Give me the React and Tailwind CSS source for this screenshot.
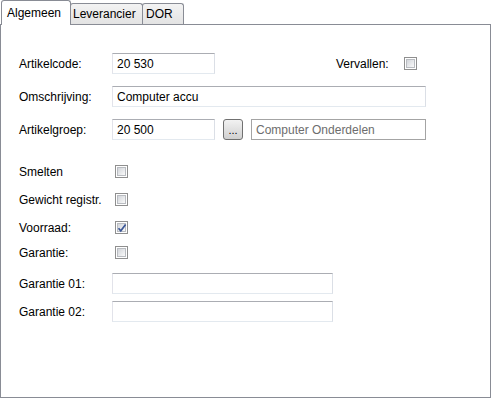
import React from "react";

const font = { fontFamily: '"Liberation Sans", Arial, sans-serif' };

function Field({ w, value, muted, dark }) {
  return (
    <div
      className={`h-[21px] flex items-center pl-[4px] bg-white text-[12px] border ${
        dark
          ? "border-[#a4a4a4]"
          : "border-t-[#abadb3] border-l-[#e2e3ea] border-r-[#dbdfe6] border-b-[#e3e9ef]"
      } ${muted ? "text-[#6d6d6d]" : "text-black"}`}
      style={{ width: w }}
    >
      {value}
    </div>
  );
}

function Check({ checked }) {
  return (
    <div className="w-[13px] h-[13px] border border-[#8f8f8f] bg-white p-[1px] relative">
      <div className="w-full h-full border border-[#b9bcc1] bg-gradient-to-br from-[#d2d5da] to-[#fafafa]" />
      {checked && (
        <svg className="absolute left-[1px] top-[1px]" width="10" height="10" viewBox="0 0 10 10">
          <path d="M1.5 5.2 L3.8 7.8 L8.6 1.6" fill="none" stroke="#3c5797" strokeWidth="1.7" />
        </svg>
      )}
    </div>
  );
}

function Label({ children, w = 93 }) {
  return (
    <div className="text-[12px] text-black leading-[14px] shrink-0" style={{ width: w }}>
      {children}
    </div>
  );
}

export default function App() {
  return (
    <div className="w-[492px] h-[398px] bg-white relative overflow-hidden" style={font}>
      {/* tabs */}
      <div className="flex items-end h-[24px] pl-[1px] text-[12px] text-black">
        <div className="h-[24px] w-[70px] bg-white border border-b-0 border-[#898c95] rounded-t-[3px] flex items-center pl-[5px] pb-[1px] relative z-10 -mb-[1px] h-[25px]">
          Algemeen
        </div>
        <div className="h-[21px] w-[73px] -ml-[1px] bg-gradient-to-b from-[#f3f3f3] to-[#e3e3e3] border border-b-0 border-[#898c95] rounded-t-[3px] flex items-center pl-[2px]">
          Leverancier
        </div>
        <div className="h-[21px] w-[42px] -ml-[1px] bg-gradient-to-b from-[#f3f3f3] to-[#e3e3e3] border border-b-0 border-[#898c95] rounded-t-[3px] flex items-center pl-[3px]">
          DOR
        </div>
      </div>
      {/* panel */}
      <div className="w-[491px] h-[374px] border border-[#898c95] bg-white flex flex-col pl-[18px] pt-[28px]">
        {/* row 1 */}
        <div className="flex items-center h-[21px]">
          <Label>Artikelcode:</Label>
          <Field w={103} value="20 530" />
          <div className="ml-[121px]">
            <Label w={68}>Vervallen:</Label>
          </div>
          <Check />
        </div>
        {/* row 2 */}
        <div className="flex items-center h-[21px] mt-[12px]">
          <Label>Omschrijving:</Label>
          <Field w={314} value="Computer accu" />
        </div>
        {/* row 3 */}
        <div className="flex items-center h-[21px] mt-[12px]">
          <Label>Artikelgroep:</Label>
          <Field w={103} value="20 500" />
          <div className="ml-[8px] w-[20px] h-[21px] rounded-[3px] border border-[#707070] bg-gradient-to-b from-[#f2f2f2] to-[#d0d0d0] flex items-end justify-center text-[11px] leading-[14px] pb-[2px]">
            ...
          </div>
          <div className="ml-[8px]">
            <Field w={175} value="Computer Onderdelen" muted dark />
          </div>
        </div>
        {/* checkboxes */}
        <div className="flex items-center h-[13px] mt-[25px]">
          <Label w={96}>Smelten</Label>
          <Check />
        </div>
        <div className="flex items-center h-[13px] mt-[15px]">
          <Label w={96}>Gewicht registr.</Label>
          <Check />
        </div>
        <div className="flex items-center h-[13px] mt-[15px]">
          <Label w={96}>Voorraad:</Label>
          <Check checked />
        </div>
        <div className="flex items-center h-[13px] mt-[12px]">
          <Label w={96}>Garantie:</Label>
          <Check />
        </div>
        {/* garantie fields */}
        <div className="flex items-center h-[21px] mt-[14px]">
          <Label>Garantie 01:</Label>
          <Field w={221} value="" />
        </div>
        <div className="flex items-center h-[21px] mt-[7px]">
          <Label>Garantie 02:</Label>
          <Field w={221} value="" />
        </div>
      </div>
    </div>
  );
}
